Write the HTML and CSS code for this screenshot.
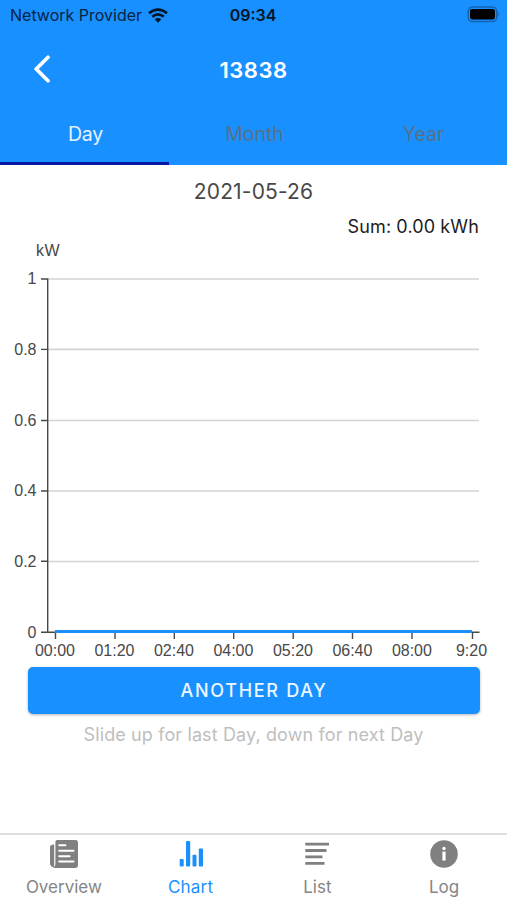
FILE: index.html
```html
<!DOCTYPE html>
<html lang="en">
<head>
<meta charset="utf-8">
<title>13838</title>
<link rel="stylesheet" href="styles.css">
</head>
<body>
<div class="app">
  <header class="top">
    <div class="status">
      <div class="carrier"><span>Network Provider</span>
        <svg class="wifi" width="20" height="15" viewBox="0 0 20 15"><g fill="none" stroke="#031526" stroke-width="2.7"><path d="M1 5.2Q10-2 19 5.2"/><path d="M4.2 8.7Q10 4 15.8 8.7"/></g><path d="M6.6 11.3Q10 8.5 13.4 11.3L10 14.8Z" fill="#031526"/></svg>
      </div>
      <span class="time">09:34</span>
      <svg class="battery" width="34" height="17" viewBox="0 0 34 17"><rect x="1.2" y=".9" width="28.6" height="14.6" rx="4.5" fill="none" stroke="#1263b0" stroke-width="1.5"/><rect x="3" y="3" width="25" height="10.4" rx="2.3" fill="#000"/><path d="M31.3 6Q33.2 8.2 31.3 10.4Z" fill="#1263b0"/></svg>
    </div>
    <div class="nav">
      <svg class="back" width="18" height="28" viewBox="0 0 18 28"><path d="M15 2.2 3.2 14l11.8 11.8" fill="none" stroke="#fff" stroke-width="3.7" stroke-linejoin="round" stroke-linecap="round"/></svg>
      <h1>13838</h1>
    </div>
    <nav class="tabs"><a class="tab on"><span>Day</span></a><a class="tab"><span>Month</span></a><a class="tab"><span>Year</span></a></nav>
  </header>
  <main>
    <div class="date"><span>2021-05-26</span></div>
    <div class="sum"><span>Sum: 0.00 kWh</span></div>
    <svg class="chart" width="507" height="426" viewBox="0 236 507 426">
      <path d="M48 279H479M48 349.4H479M48 420.5H479M48 491H479M48 561.5H479" stroke="#d4d4d4" stroke-width="1.6"/>
      <path d="M47.7 278.3V632.3M41 279h7M41 349.4h7M41 420.5h7M41 491h7M41 561.2h7M41 632.3H479.5M55.5 632v7M115 632v7M174.3 632v7M233.7 632v7M293.2 632v7M352.5 632v7M412 632v7M472.5 632v7" fill="none" stroke="#484848" stroke-width="1.4"/>
      <path d="M55 631.5H472" stroke="#1b90fd" stroke-width="3"/>
      <g class="axis">
        <text x="36" y="255.5" textLength="23.5">kW</text>
        <g text-anchor="end"><text x="36.5" y="284.3">1</text><text x="36.5" y="354.8">0.8</text><text x="36.5" y="425.8">0.6</text><text x="36.5" y="496.3">0.4</text><text x="36.5" y="566.8">0.2</text><text x="36.5" y="637.5">0</text></g>
        <g text-anchor="middle"><text x="55" y="656.3">00:00</text><text x="114.5" y="656.3">01:20</text><text x="174" y="656.3">02:40</text><text x="233.4" y="656.3">04:00</text><text x="293" y="656.3">05:20</text><text x="352.4" y="656.3">06:40</text><text x="411.9" y="656.3">08:00</text><text x="471.5" y="656.3">9:20</text></g>
      </g>
    </svg>
    <button class="another" type="button"><span>ANOTHER DAY</span></button>
    <p class="hint"><span>Slide up for last Day, down for next Day</span></p>
  </main>
  <nav class="bottom">
    <a><svg width="28" height="28" viewBox="0 0 28 28"><path d="M4.2 4.5V27.4Q0 27 0 23V7Q0 4.8 4.2 4.5Z" fill="#808080"/><path d="M7.2 0H25.5Q28 0 28 2.5V25Q28 28 25 28H3.5Q5.4 26.7 5.4 24V2Q5.4 0 7.2 0Z" fill="#808080"/><path d="M9.2 5.3h6.3M9.2 10.8h14.3M9.2 16.2h10.5M9.2 21.6h14.3" stroke="#fff" stroke-width="2" stroke-linecap="round"/></svg><span>Overview</span></a>
    <a class="active"><svg width="28" height="28" viewBox="0 0 28 28"><g fill="#1b8ffb"><rect x="2.7" y="19" width="4" height="7.6" rx="1"/><rect x="9" y="1" width="4.2" height="25.6" rx="1"/><rect x="15.5" y="14.8" width="4" height="11.8" rx="1"/><rect x="21.8" y="8.4" width="4.2" height="18.2" rx="1"/></g></svg><span>Chart</span></a>
    <a><svg width="28" height="28" viewBox="0 0 28 28"><path d="M2.3 4.2H26M2.3 10.5H23.5M2.3 16.9H19.5M2.3 23.3H21.5" stroke="#808080" stroke-width="2.8"/></svg><span>List</span></a>
    <a><svg width="28" height="28" viewBox="0 0 28 28"><circle cx="14" cy="14" r="13.8" fill="#808080"/><circle cx="14" cy="8.5" r="1.7" fill="#fff"/><path d="M12.4 11.6h3.2v9h-3.2z" fill="#fff"/></svg><span>Log</span></a>
  </nav>
</div>
</body>
</html>
```
FILE: styles.css
```css
* { box-sizing: border-box; }
body { margin: 0; background: #fff; font-family: Inter, "Liberation Sans", sans-serif; }
.app { width: 507px; height: 900px; display: flex; flex-direction: column; overflow: hidden; }
.top { background: #1990ff; height: 165px; display: flex; flex-direction: column; }
.status { height: 30px; display: grid; grid-template-columns: 1fr auto 1fr; align-items: center; padding: 0 8px 0 10px; font-size: 16px; color: #06233f; }
.carrier { display: flex; align-items: center; gap: 6px; }
.time { font-weight: 600; color: #031526; }
.status { padding-right: 12px; }
.battery { justify-self: end; margin: 0 -6px 2px 0; }
.time { margin-left: 1px; }
.nav { height: 80px; display: grid; grid-template-columns: 54px 1fr 54px; align-items: center; }
.back { margin-left: 33px; margin-bottom: 2px; }
h1 { margin: 0; text-align: center; color: #fff; font-size: 22px; font-weight: 600; letter-spacing: .5px; }
.tabs { flex: 1; display: grid; grid-template-columns: repeat(3, 1fr); }
.tab { height: 55px; padding: 12px 0 0 2px; line-height: 25px; text-align: center; font-size: 19.5px; color: #57708a; border-bottom: 3px solid transparent; }
.on { color: #e4f2ff; border-color: #0717a0; letter-spacing: -.2px; }
main { flex: 1; display: flex; flex-direction: column; }
.date { height: 48px; line-height: 53px; text-align: center; font-size: 21px; letter-spacing: .15px; color: #484848; }
.sum { height: 23px; line-height: 27px; padding-right: 28px; text-align: right; font-size: 18px; letter-spacing: .12px; color: #1c1c1c; }
.chart { display: block; flex: none; }
.axis { font-family: "Liberation Sans", Arial, sans-serif; font-size: 16px; fill: #484848; }
.another { flex: none; margin: 5px 27px 0 28px; height: 47px; padding: 0; border: 0; border-radius: 5px; background: #1990ff; color: #edf7ff; font: 500 18px Inter, sans-serif; letter-spacing: 1.7px; box-shadow: 0 1px 3px rgba(0, 0, 0, .3); }
.hint { margin: 9px 0 0; line-height: 24px; text-align: center; font-size: 18px; letter-spacing: .12px; color: #bebebe; }
.bottom { height: 67px; border-top: 2px solid #dedede; display: grid; grid-template-columns: repeat(4, 1fr); }
.bottom a { display: flex; flex-direction: column; align-items: center; padding: 5px 0 0 1px; font-size: 17px; line-height: 20px; color: #858585; }
.bottom span { margin-top: 9px; }
.bottom .active { color: #1990ff; letter-spacing: .2px; }
```
